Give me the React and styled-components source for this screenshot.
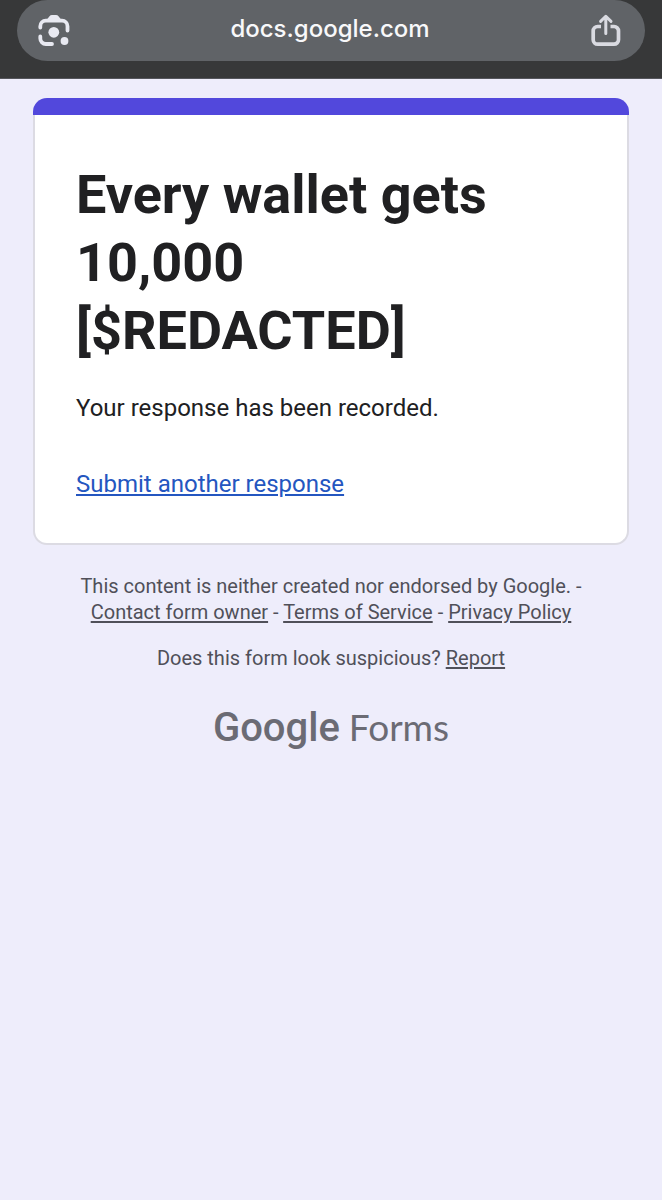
import React from 'react';
import styled, { createGlobalStyle } from 'styled-components';

const GlobalStyle = createGlobalStyle`
  * {
    box-sizing: border-box;
  }
  body {
    margin: 0;
    background: #eeedfb;
    font-family: Roboto, 'Liberation Sans', sans-serif;
  }
  h1, p {
    margin: 0;
  }
`;

const BrowserBar = styled.header`
  padding: 0 17px 17px;
  background: #373839;
  border-bottom: 1px solid #55565c;
`;

const AddressPill = styled.div`
  display: flex;
  justify-content: space-between;
  align-items: center;
  height: 61px;
  padding: 0 22px 1px 20px;
  border-radius: 31px;
  background: #606367;
`;

const IconButton = styled.button`
  display: flex;
  padding: 0;
  border: 0;
  background: none;
  color: ${({ $color }) => $color};
  cursor: pointer;
`;

const Address = styled.span`
  padding-bottom: 2px;
  color: #f8f8fa;
  font-family: Inter, sans-serif;
  font-size: 24px;
  font-weight: 500;
  line-height: 32px;
`;

const Page = styled.main`
  padding: 19px 33px;
`;

const CardHeader = styled.div`
  height: 17px;
  border-radius: 14px 14px 0 0;
  background: #5248dc;
`;

const Card = styled.section`
  padding: 46px 41px 41px;
  border: 2px solid #dcdbe3;
  border-top: 0;
  border-radius: 0 0 14px 14px;
  background: #fff;
`;

const Title = styled.h1`
  color: #202022;
  font-size: 54px;
  font-weight: 700;
  line-height: 68px;
`;

const Message = styled.p`
  margin: 25px 0 40px;
  color: #202022;
  font-size: 24px;
  line-height: 36px;
`;

const Link = styled.a`
  color: inherit;
  text-decoration: underline;
  text-underline-offset: 2px;
`;

const SubmitLink = styled(Link)`
  color: #2456c0;
  font-size: 24px;
  line-height: 36px;
`;

const Footer = styled.footer`
  display: flex;
  flex-direction: column;
  align-items: center;
  gap: 20px;
  padding: 28px 32px;
  color: #505059;
  font-size: 20px;
  line-height: 26px;
  text-align: center;
`;

const Logo = styled.a`
  display: flex;
  align-items: baseline;
  gap: 9px;
  margin-top: 12px;
  color: #6b6b74;
  line-height: 48px;
  text-decoration: none;
`;

const LogoBrand = styled.span`
  font-size: 40px;
  font-weight: 500;
`;

const LogoProduct = styled.span`
  font-family: Lato, sans-serif;
  font-size: 37px;
`;

const CameraIcon = () => (
  <svg width="34" height="34" viewBox="0 0 34 34" fill="none" aria-hidden="true">
    <path
      d="M3.300 14.500v-1.300a5.500 5.500 0 0 1 5.500-5.500h16.200a5.500 5.500 0 0 1 5.500 5.500v4.300M3.300 23.500v2a5.500 5.500 0 0 0 5.500 5.500h6.200"
      stroke="currentColor"
      strokeWidth="3.800"
      strokeLinecap="round"
    />
    <path d="M9.500 7l3-3.800Q13.400 2 15 2h4q1.600 0 2.500 1.200l3 3.800v1h-15z" fill="currentColor" />
    <circle cx="16.800" cy="19.300" r="5.400" fill="currentColor" />
    <circle cx="27.500" cy="28" r="3.900" fill="currentColor" />
  </svg>
);

const ShareIcon = () => (
  <svg width="34" height="34" viewBox="0 0 34 34" fill="none" aria-hidden="true">
    <path
      d="M12 13.500H8.700a4.500 4.500 0 0 0-4.500 4.500v8.700a4.500 4.500 0 0 0 4.500 4.500H25a4.500 4.500 0 0 0 4.500-4.500V18a4.500 4.500 0 0 0-4.500-4.500h-3.500"
      stroke="currentColor"
      strokeWidth="3.700"
    />
    <path
      d="M16.800 20.500V3.500M11.600 8.400l5.200-5.100L22 8.400"
      stroke="currentColor"
      strokeWidth="3"
      strokeLinecap="round"
      strokeLinejoin="round"
    />
  </svg>
);

const App = () => {
  return (
    <>
      <GlobalStyle />
      <BrowserBar>
        <AddressPill>
          <IconButton type="button" aria-label="Search with camera" $color="#e8e9f1">
            <CameraIcon />
          </IconButton>
          <Address>docs.google.com</Address>
          <IconButton type="button" aria-label="Share" $color="#d9dae1">
            <ShareIcon />
          </IconButton>
        </AddressPill>
      </BrowserBar>
      <Page>
        <CardHeader />
        <Card>
          <Title>Every wallet gets 10,000 [$REDACTED]</Title>
          <Message>Your response has been recorded.</Message>
          <SubmitLink href="#submit">Submit another response</SubmitLink>
        </Card>
        <Footer>
          <p>
            This content is neither created nor endorsed by Google. -{' '}
            <Link href="#contact">Contact form owner</Link> - <Link href="#terms">Terms of Service</Link> -{' '}
            <Link href="#privacy">Privacy Policy</Link>
          </p>
          <p>
            Does this form look suspicious? <Link href="#report">Report</Link>
          </p>
          <Logo href="#forms">
            <LogoBrand>Google</LogoBrand>
            <LogoProduct>Forms</LogoProduct>
          </Logo>
        </Footer>
      </Page>
    </>
  );
};

export default App;
